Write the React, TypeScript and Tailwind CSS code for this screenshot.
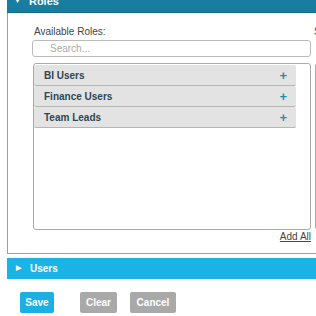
export default function App() {
  const roles = ["BI Users", "Finance Users", "Team Leads"];
  return (
    <div className="w-[316px] h-[316px] overflow-hidden bg-white font-['Liberation_Sans',Arial,sans-serif]">
      <div className="-mt-[9px] ml-[7px] w-[400px]">
        <div className="h-[22px] bg-[#177da1] border-b border-[#136a89] flex items-center pl-[7px] text-white text-[11px] font-bold">
          <span className="text-[7px] mr-[8px]">▼</span>
          <span>Roles</span>
        </div>
        <div className="border-l border-b border-[#8fa4ad] h-[241px] pl-[24px] pt-[13px] flex gap-[3px]">
          <div className="w-[279px] flex flex-col">
            <p className="text-[10px] leading-[12px] text-[#444] pl-[2px]">Available Roles:</p>
            <div className="mt-[2px] h-[17px] border border-[#bbb] rounded-[3px] flex items-center pl-[17px] text-[10px] text-[#aaa]">
              Search...
            </div>
            <div className="mt-[6px] ml-[1px] h-[167px] border border-[#aaa] rounded-[3px] pt-[1px] pr-[14px]">
              {roles.map((r) => (
                <div
                  key={r}
                  className="h-[21px] bg-[#e3e3e3] border-b border-[#b5b5b5] rounded-[2px] flex items-center justify-between pl-[10px] pr-[9px] text-[10px] font-bold text-[#2f4656]"
                >
                  <span>{r}</span>
                  <span className="text-[#1f8fae] text-[13px] leading-none font-bold">+</span>
                </div>
              ))}
            </div>
            <div className="flex justify-end mt-[1px]">
              <span className="text-[10px] leading-[12px] text-[#444] underline">Add All</span>
            </div>
          </div>
          <div className="w-[90px] flex flex-col">
            <p className="text-[10px] leading-[12px] text-[#444] whitespace-nowrap">Selected Roles:</p>
            <div className="mt-[25px] ml-[1px] h-[167px] border border-[#aaa] rounded-[3px]"></div>
          </div>
        </div>
        <div className="mt-[4px] h-[21px] bg-[#1bb3e6] flex items-center pl-[9px] text-white text-[10px] font-bold">
          <span className="text-[7px] mr-[9px]">▶</span>
          <span>Users</span>
        </div>
      </div>
      <div className="mt-[13px] ml-[20px] flex">
        <button className="w-[34px] h-[21px] bg-[#1bb0e3] rounded-[2px] text-white text-[10px] font-bold">Save</button>
        <button className="ml-[26px] w-[37px] h-[21px] bg-[#a9a9a9] rounded-[2px] text-white text-[10px] font-bold">Clear</button>
        <button className="ml-[13px] w-[46px] h-[21px] bg-[#a9a9a9] rounded-[2px] text-white text-[10px] font-bold">Cancel</button>
      </div>
    </div>
  );
}
